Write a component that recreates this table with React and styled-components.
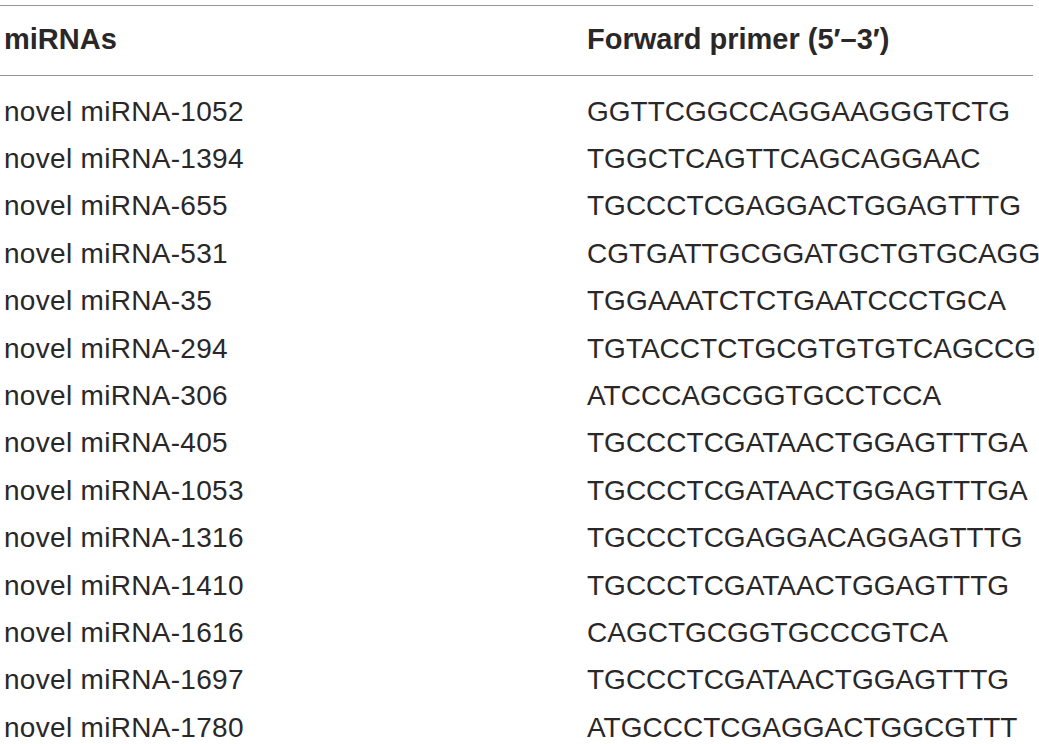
import styled, { createGlobalStyle } from "styled-components";

const rows = [
  ["novel miRNA-1052", "GGTTCGGCCAGGAAGGGTCTG"],
  ["novel miRNA-1394", "TGGCTCAGTTCAGCAGGAAC"],
  ["novel miRNA-655", "TGCCCTCGAGGACTGGAGTTTG"],
  ["novel miRNA-531", "CGTGATTGCGGATGCTGTGCAGG"],
  ["novel miRNA-35", "TGGAAATCTCTGAATCCCTGCA"],
  ["novel miRNA-294", "TGTACCTCTGCGTGTGTCAGCCG"],
  ["novel miRNA-306", "ATCCCAGCGGTGCCTCCA"],
  ["novel miRNA-405", "TGCCCTCGATAACTGGAGTTTGA"],
  ["novel miRNA-1053", "TGCCCTCGATAACTGGAGTTTGA"],
  ["novel miRNA-1316", "TGCCCTCGAGGACAGGAGTTTG"],
  ["novel miRNA-1410", "TGCCCTCGATAACTGGAGTTTG"],
  ["novel miRNA-1616", "CAGCTGCGGTGCCCGTCA"],
  ["novel miRNA-1697", "TGCCCTCGATAACTGGAGTTTG"],
  ["novel miRNA-1780", "ATGCCCTCGAGGACTGGCGTTT"],
];

export default function App() {
  return (
    <>
      <GlobalStyle />
      <Table>
        <HeadRow>
          <Cell bold>miRNAs</Cell>
          <Cell bold>Forward primer (5′–3′)</Cell>
        </HeadRow>
        <Body>
          {rows.map(([name, primer]) => (
            <Row key={name}>
              <Cell spaced>{name}</Cell>
              <Cell>{primer}</Cell>
            </Row>
          ))}
        </Body>
      </Table>
    </>
  );
}

const GlobalStyle = createGlobalStyle`
  html, body {
    margin: 0;
    padding: 0;
    background: #fff;
    overflow: hidden;
  }
`;

const Table = styled.div`
  width: 1033px;
  margin-top: 5px;
  border-top: 1px solid #959595;
  font-family: "Liberation Sans", Arial, sans-serif;
  font-size: 28px;
  color: #2a2728;
`;

const HeadRow = styled.div`
  display: grid;
  grid-template-columns: 583px 1fr;
  align-items: center;
  height: 70px;
  padding-left: 4px;
  padding-bottom: 2px;
  box-sizing: border-box;
  border-bottom: 1px solid #959595;
  font-size: 29px;
`;

const Body = styled.div`
  padding-top: 12px;
`;

const Row = styled.div`
  display: grid;
  grid-template-columns: 583px 1fr;
  align-items: center;
  height: 47.4px;
  padding-left: 4px;
`;

const Cell = styled.div`
  font-weight: ${(p) => (p.bold ? 700 : 400)};
  letter-spacing: ${(p) => (p.spaced ? "0.3px" : "0")};
  white-space: nowrap;
  line-height: 1.15;
`;
